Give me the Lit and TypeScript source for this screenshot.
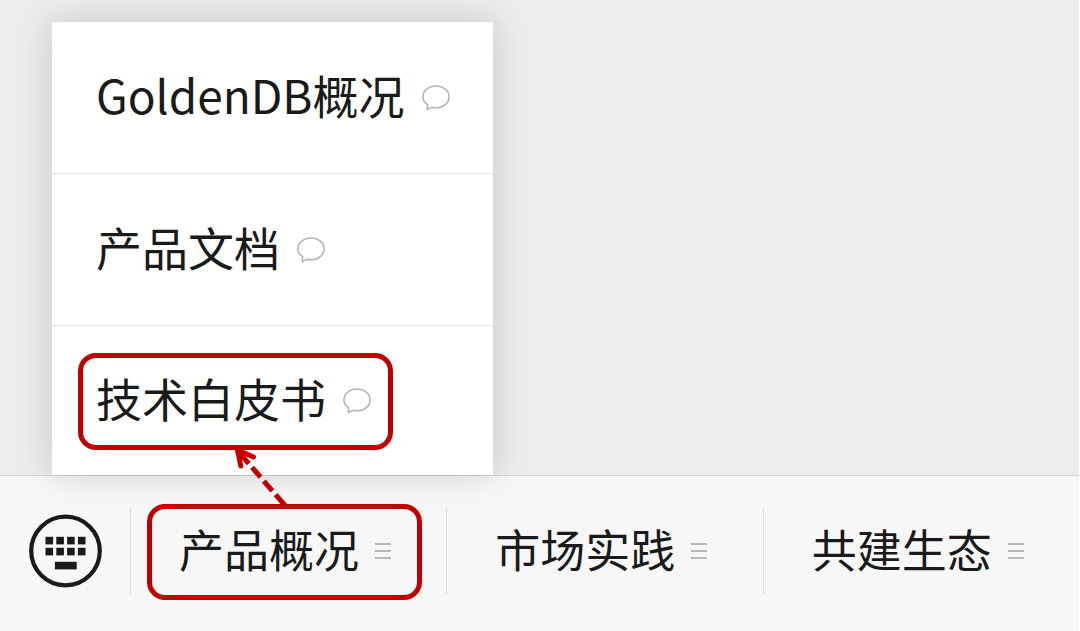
import { LitElement, html, css, svg } from "lit";
import { customElement, property } from "lit/decorators.js";

@customElement("chat-bubble-icon")
class ChatBubbleIcon extends LitElement {
  static styles = css`
    :host { display: block; flex: none; }
    svg { display: block; }
  `;
  render() {
    return html`<svg width="28" height="26" viewBox="0 0 28 26" aria-hidden="true"
      fill="none" stroke="#b4b4b4" stroke-width="1.6" stroke-linejoin="round">
      <path d="M5.6 19.6C2.600 17.600 .9 14.900 .9 11.900 .9 5.900 6.700 1 14 1s13.100 4.900 13.100 10.900S21.300 22.700 14 22.700c-1.500 0-3-.1-4.300-.3L5.300 24.600z"/>
    </svg>`;
  }
}

@customElement("sub-menu-icon")
class SubMenuIcon extends LitElement {
  static styles = css`
    :host { display: block; flex: none; }
    svg { display: block; }
  `;
  render() {
    return html`<svg width="16" height="18" viewBox="0 0 16 18" aria-hidden="true"
      stroke="#b8b8b8" stroke-width="1.8">
      <path d="M0 2h16M0 9h16M0 16h16"/>
    </svg>`;
  }
}

@customElement("popup-menu")
class PopupMenu extends LitElement {
  @property({ type: Array }) items: string[] = [];
  @property() marked = "";

  static styles = css`
    :host {
      display: block;
      background: #fff;
      box-shadow: 0 0 32px rgba(0, 0, 0, 0.16);
    }
    .row {
      display: flex;
      align-items: center;
      box-sizing: border-box;
      width: 100%;
      height: 152px;
      padding: 0 44px;
      border: 0;
      border-bottom: 1px solid #e2e2e2;
      background: none;
      color: #1a1a1a;
      font: inherit;
      font-size: 46px;
      line-height: 58px;
      white-space: nowrap;
    }
    .row:last-child { height: 149px; border-bottom: 0; }
    .content { display: flex; align-items: center; gap: 17px; position: relative; }
    .label { padding-bottom: 8px; }
    .mark {
      position: absolute;
      inset: -15px -22px -16px -18px;
      border: 5px solid #c00000;
      border-radius: 18px;
      pointer-events: none;
    }
  `;
  render() {
    return html`${this.items.map(
      (t) => html`<button class="row" type="button">
        <span class="content">
          <span class="label">${t}</span><chat-bubble-icon></chat-bubble-icon>
          ${t === this.marked ? html`<span class="mark"></span>` : ""}
        </span>
      </button>`
    )}`;
  }
}

@customElement("app-root")
class AppRoot extends LitElement {
  private tabs = ["产品概况", "市场实践", "共建生态"];
  private docs = ["GoldenDB概况", "产品文档", "技术白皮书"];

  static styles = css`
    :host {
      display: flex;
      flex-direction: column;
      box-sizing: border-box;
      min-height: 100vh;
      padding-right: 1px;
      background: #fff;
      color: #1a1a1a;
      font-family: "Noto Sans CJK SC", "Noto Sans", sans-serif;
    }
    .chat { flex: 1; background: #ececec; }
    .bar {
      position: relative;
      display: flex;
      align-items: center;
      box-sizing: border-box;
      height: 156px;
      padding-bottom: 5px;
      border-top: 1px solid #d2d2d2;
      background: #f7f7f7;
    }
    .keyboard {
      flex: none;
      display: flex;
      justify-content: center;
      width: 130px;
      padding: 0;
      border: 0;
      background: none;
    }
    .tab {
      flex: 1;
      display: flex;
      align-items: center;
      box-sizing: border-box;
      height: 86px;
      padding: 0 0 0 48px;
      border: 0;
      border-left: 1px solid #dedede;
      background: none;
      color: inherit;
      font: inherit;
      font-size: 45px;
      line-height: 60px;
      white-space: nowrap;
    }
    .content { position: relative; display: flex; align-items: center; gap: 16px; }
    .label { padding-bottom: 4px; }
    .mark {
      position: absolute;
      inset: -15px -31px -17px -32px;
      border: 5px solid #c00000;
      border-radius: 18px;
      pointer-events: none;
      z-index: 2;
    }
    .menu {
      position: absolute;
      left: 52px;
      bottom: 156px;
      width: 441px;
      z-index: 1;
    }
    .arrow {
      position: absolute;
      left: 232px;
      top: -29px;
      z-index: 2;
      pointer-events: none;
    }
  `;

  private keyboardIcon() {
    const cols = [17, 27.8, 38.6, 49.4];
    return html`<svg width="74" height="74" viewBox="0 0 74 74" aria-hidden="true" fill="#1a1a1a">
      <circle cx="37.500" cy="37" r="34.3" fill="none" stroke="#1a1a1a" stroke-width="4.2"/>
      ${cols.map((x) => svg`<rect x=${x + 0.5} y="22.800" width="7.600" height="7.600"/><rect x=${x + 0.5} y="33.800" width="7.600" height="7.600"/>`)}
      <rect x="26.900" y="47.800" width="21.800" height="7.600"/>
    </svg>`;
  }

  render() {
    return html`
      <main class="chat"></main>
      <nav class="bar">
        <button class="keyboard" type="button" aria-label="键盘">${this.keyboardIcon()}</button>
        ${this.tabs.map(
          (t, i) => html`<button class="tab" type="button">
            <span class="content">
              <span class="label">${t}</span><sub-menu-icon></sub-menu-icon>
              ${i === 0 ? html`<span class="mark"></span>` : ""}
            </span>
          </button>`
        )}
        <popup-menu class="menu" .items=${this.docs} marked="技术白皮书"></popup-menu>
        <svg class="arrow" width="56" height="60" viewBox="0 0 56 60" aria-hidden="true"
          fill="none" stroke="#c00000" stroke-width="5">
          <path d="M5 3L53 58.500" stroke-dasharray="18 5 13 5 13 5 20"/>
          <path d="M8.800 19L5.500 3L21.500 10" stroke-linecap="round"/>
        </svg>
      </nav>
    `;
  }
}
